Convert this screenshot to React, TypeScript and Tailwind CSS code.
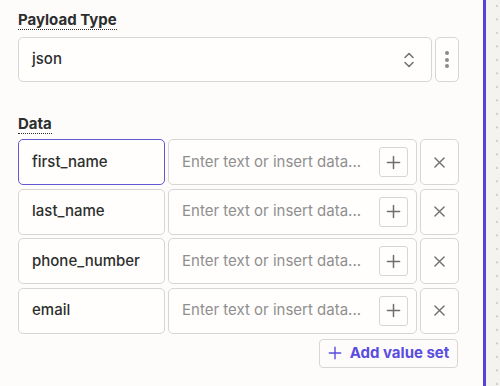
import React from "react";

const rows = [
  { key: "first_name", focused: true },
  { key: "last_name", focused: false },
  { key: "phone_number", focused: false },
  { key: "email", focused: false },
];

const PlusIcon = ({ className }: { className?: string }) => (
  <svg viewBox="0 0 16 16" className={className} fill="none" stroke="currentColor" strokeWidth="1.6" strokeLinecap="round">
    <path d="M8 1.5v13M1.5 8h13" />
  </svg>
);

const CloseIcon = () => (
  <svg viewBox="0 0 12 12" className="w-[11px] h-[11px]" fill="none" stroke="currentColor" strokeWidth="1.5" strokeLinecap="round">
    <path d="M1 1l10 10M11 1L1 11" />
  </svg>
);

const Label = ({ children }: { children: React.ReactNode }) => (
  <div className="flex">
    <span className="block text-[15px] leading-[19px] font-bold text-[#2d2e2e] border-b border-dotted border-[#2d2e2e]">
      {children}
    </span>
  </div>
);

export default function App() {
  return (
    <div className="flex w-[500px] h-[386px] bg-[#fdfcfa] font-['Inter',sans-serif] overflow-hidden">
      <div className="w-[486px] shrink-0 pl-[18px] pr-[24px] pt-[10px] border-r-[3px] border-[#5443d4]">
        <Label>Payload Type</Label>
        <div className="flex gap-[3px] mt-[7px] h-[45px]">
          <div className="flex-1 flex items-center justify-between pl-[13px] pr-[16px] bg-[#fffefc] border border-[#d8d6d2] rounded-[5px]">
            <span className="text-[15px] font-medium text-[#2d2e2e]">json</span>
            <svg viewBox="0 0 12 18" className="w-[12px] h-[18px] text-[#6f6f6f]" fill="none" stroke="currentColor" strokeWidth="1.5" strokeLinecap="round" strokeLinejoin="round">
              <path d="M2 6.5L6 2.5l4 4M2 11.5l4 4 4-4" />
            </svg>
          </div>
          <button className="w-[24px] flex flex-col items-center justify-center gap-[2.5px] bg-[#fffefc] border border-[#d8d6d2] rounded-[5px]">
            <span className="w-[4px] h-[4px] rounded-full bg-[#8a8a8a]" />
            <span className="w-[4px] h-[4px] rounded-full bg-[#8a8a8a]" />
            <span className="w-[4px] h-[4px] rounded-full bg-[#8a8a8a]" />
          </button>
        </div>

        <div className="mt-[32px]">
          <Label>Data</Label>
        </div>
        <div className="flex flex-col gap-[3.5px] mt-[5px]">
          {rows.map((r) => (
            <div key={r.key} className="flex gap-[3px] h-[46px]">
              <div
                className={
                  r.focused
                    ? "w-[147px] flex items-center pl-[13px] bg-[#fffefc] border border-[#6357d2] rounded-[5px]"
                    : "w-[147px] flex items-center pl-[13px] bg-[#fffefc] border border-[#d8d6d2] rounded-[5px]"
                }
              >
                <span className="text-[15px] font-medium text-[#2d2e2e]">{r.key}</span>
              </div>
              <div className="w-[249px] flex items-center justify-between pl-[13px] pr-[8px] bg-[#fffefc] border border-[#d8d6d2] rounded-[5px]">
                <span className="text-[15px] text-[#8f8f8f]">Enter text or insert data...</span>
                <button className="w-[29px] h-[30px] flex items-center justify-center border border-[#d8d6d2] rounded-[3px] text-[#6f6f6f]">
                  <PlusIcon className="w-[15px] h-[15px]" />
                </button>
              </div>
              <button className="w-[39px] flex items-center justify-center bg-[#fffefc] border border-[#d8d6d2] rounded-[5px] text-[#6f6f6f]">
                <CloseIcon />
              </button>
            </div>
          ))}
        </div>
        <div className="flex justify-end mt-[5px] pr-[1px]">
          <button className="h-[29px] w-[139px] flex items-center justify-center gap-[8px] border border-[#d8d6d2] rounded-[4px] text-[#5b4ce0]">
            <PlusIcon className="w-[14px] h-[14px]" />
            <span className="text-[15px] font-bold">Add value set</span>
          </button>
        </div>
      </div>
      <div className="flex-1 bg-[#f4f3f0] bg-[radial-gradient(circle_at_11px_6px,#c9c8c4_0.8px,transparent_1px)] bg-[length:14px_13.5px]" />
    </div>
  );
}
